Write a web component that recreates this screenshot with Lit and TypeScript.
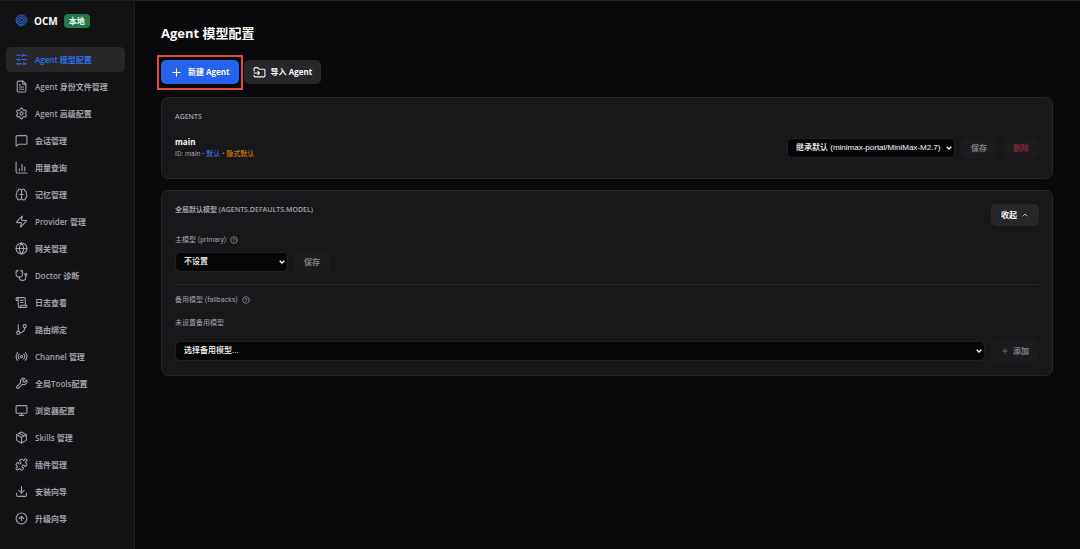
import { LitElement, html, svg, css, type SVGTemplateResult } from "lit";
import { customElement, property, state } from "lit/decorators.js";
import { classMap } from "lit/directives/class-map.js";

const icons: Record<string, SVGTemplateResult> = {
  sliders: svg`<path d="M21 4h-7M10 4H3M21 12h-9M8 12H3M21 20h-5M12 20H3M14 2v4M8 10v4M16 18v4"/>`,
  file: svg`<path d="M15 2H6a2 2 0 0 0-2 2v16a2 2 0 0 0 2 2h12a2 2 0 0 0 2-2V7Z"/><path d="M14 2v4a2 2 0 0 0 2 2h4M10 9H8M16 13H8M16 17H8"/>`,
  settings: svg`<path d="M9.671 4.136a2.34 2.34 0 0 1 4.659 0 2.34 2.34 0 0 0 3.319 1.915 2.34 2.34 0 0 1 2.33 4.033 2.34 2.34 0 0 0 0 3.831 2.34 2.34 0 0 1-2.33 4.033 2.34 2.34 0 0 0-3.319 1.915 2.34 2.34 0 0 1-4.659 0 2.34 2.34 0 0 0-3.32-1.915 2.34 2.34 0 0 1-2.33-4.033 2.34 2.34 0 0 0 0-3.831A2.34 2.34 0 0 1 6.35 6.051a2.34 2.34 0 0 0 3.319-1.915"/><circle cx="12" cy="12" r="3"/>`,
  message: svg`<path d="M22 17a2 2 0 0 1-2 2H6.8a2 2 0 0 0-1.4.6l-2.2 2.2A.7.7 0 0 1 2 21.300V5a2 2 0 0 1 2-2h16a2 2 0 0 1 2 2z"/>`,
  chart: svg`<path d="M2 2v18a2 2 0 0 0 2 2h18M8 18v-3M13 18V6M18 18v-7"/>`,
  brain: svg`<path d="M12 5a3 3 0 1 0-5.997.125 4 4 0 0 0-2.526 5.770 4 4 0 0 0 .556 6.588A4 4 0 1 0 12 18Z"/><path d="M12 5a3 3 0 1 1 5.997.125 4 4 0 0 1 2.526 5.770 4 4 0 0 1-.556 6.588A4 4 0 1 1 12 18Z"/><path d="M9 12h6"/>`,
  zap: svg`<path d="M4 14a1 1 0 0 1-.78-1.630l9.900-10.200a.5.5 0 0 1 .86.460l-1.920 6.020A1 1 0 0 0 13 10h7a1 1 0 0 1 .78 1.630l-9.900 10.200a.5.5 0 0 1-.86-.460l1.920-6.020A1 1 0 0 0 11 14z"/>`,
  globe: svg`<circle cx="12" cy="12" r="10"/><path d="M12 2a14.500 14.500 0 0 0 0 20 14.500 14.500 0 0 0 0-20M2 12h20"/>`,
  stethoscope: svg`<path d="M11 2v2M5 2v2M5 3H4a2 2 0 0 0-2 2v4a6 6 0 0 0 12 0V5a2 2 0 0 0-2-2h-1"/><path d="M8 15a6 6 0 0 0 12 0v-3"/><circle cx="20" cy="10" r="2"/>`,
  scroll: svg`<path d="M15 12h-5M15 8h-5M19 17V5a2 2 0 0 0-2-2H4"/><path d="M8 21h12a2 2 0 0 0 2-2v-1a1 1 0 0 0-1-1H11a1 1 0 0 0-1 1v1a2 2 0 1 1-4 0V5a2 2 0 1 0-4 0v2a1 1 0 0 0 1 1h3"/>`,
  branch: svg`<path d="M6 3v12"/><circle cx="18" cy="6" r="3"/><circle cx="6" cy="18" r="3"/><path d="M18 9a9 9 0 0 1-9 9"/>`,
  radio: svg`<path d="M4.900 19.100C1 15.200 1 8.800 4.900 4.900M7.800 16.200c-2.300-2.300-2.300-6.100 0-8.500"/><circle cx="12" cy="12" r="2"/><path d="M16.200 7.800c2.300 2.300 2.300 6.100 0 8.500M19.100 4.900C23 8.800 23 15.100 19.100 19"/>`,
  wrench: svg`<path d="M14.700 6.300a1 1 0 0 0 0 1.400l1.600 1.600a1 1 0 0 0 1.400 0l3.770-3.770a6 6 0 0 1-7.940 7.940l-6.910 6.910a2.120 2.120 0 0 1-3-3l6.910-6.910a6 6 0 0 1 7.940-7.940l-3.760 3.760z"/>`,
  monitor: svg`<rect x="2" y="3" width="20" height="14" rx="2"/><path d="M8 21h8M12 17v4"/>`,
  package: svg`<path d="M11 21.730a2 2 0 0 0 2 0l7-4A2 2 0 0 0 21 16V8a2 2 0 0 0-1-1.730l-7-4a2 2 0 0 0-2 0l-7 4A2 2 0 0 0 3 8v8a2 2 0 0 0 1 1.730z"/><path d="M12 22V12M3.300 7 12 12l8.700-5M7.500 4.270l9 5.150"/>`,
  puzzle: svg`<path d="M15.390 4.390a1 1 0 0 0 1.680-.474 2.500 2.500 0 1 1 3.014 3.015 1 1 0 0 0-.474 1.680l1.683 1.682a2.414 2.414 0 0 1 0 3.414L19.610 15.390a1 1 0 0 1-1.680-.474 2.500 2.500 0 1 0-3.014 3.015 1 1 0 0 1 .474 1.680l-1.683 1.682a2.414 2.414 0 0 1-3.414 0L8.610 19.610a1 1 0 0 0-1.680.474 2.500 2.500 0 1 1-3.014-3.015 1 1 0 0 0 .474-1.680l-1.683-1.682a2.414 2.414 0 0 1 0-3.414L4.390 8.610a1 1 0 0 1 1.680.474 2.500 2.500 0 1 0 3.014-3.015 1 1 0 0 1-.474-1.680l1.683-1.682a2.414 2.414 0 0 1 3.414 0z"/>`,
  download: svg`<path d="M21 15v4a2 2 0 0 1-2 2H5a2 2 0 0 1-2-2v-4M7 10l5 5 5-5M12 15V3"/>`,
  up: svg`<circle cx="12" cy="12" r="10"/><path d="m16 12-4-4-4 4M12 16V8"/>`,
  plus: svg`<path d="M5 12h14M12 5v14"/>`,
  folder: svg`<path d="M2 9V5a2 2 0 0 1 2-2h3.900a2 2 0 0 1 1.690.900l.81 1.200a2 2 0 0 0 1.670.900H20a2 2 0 0 1 2 2v10a2 2 0 0 1-2 2H4a2 2 0 0 1-2-2v-1M2 13h10M9 16l3-3-3-3"/>`,
  chevron: svg`<path d="m18 15-6-6-6 6"/>`,
  help: svg`<circle cx="12" cy="12" r="10"/><path d="M9.090 9a3 3 0 0 1 5.830 1c0 2-3 3-3 3M12 17h.01"/>`,
  logo: svg`<path stroke-width="1.700" d="M13 22A10.500 10.500 0 0 1 2 11 9.500 9.500 0 0 1 12 2a9.500 9.500 0 0 1 10 9 8.500 8.500 0 0 1-8 9 8 8 0 0 1-9-8 7 7 0 0 1 7-7 7 7 0 0 1 7 7 5.500 5.500 0 0 1-6 5 5 5 0 0 1-5-5 4 4 0 0 1 4-4 4 4 0 0 1 4 4 2.500 2.500 0 0 1-3 2 2 2 0 0 1-2-2"/>`,
};

@customElement("ocm-icon")
class OcmIcon extends LitElement {
  static styles = css`
    :host { display: inline-flex; flex: none; width: 13px; height: 13px; }
    svg { width: 100%; height: 100%; fill: none; stroke: currentColor; stroke-width: 2; stroke-linecap: round; stroke-linejoin: round; }
  `;
  @property() name = "";
  render() {
    return html`<svg viewBox="0 0 24 24" aria-hidden="true">${icons[this.name]}</svg>`;
  }
}

const nav: [string, string][] = [
  ["sliders", "Agent 模型配置"],
  ["file", "Agent 身份文件管理"],
  ["settings", "Agent 高级配置"],
  ["message", "会话管理"],
  ["chart", "用量查询"],
  ["brain", "记忆管理"],
  ["zap", "Provider 管理"],
  ["globe", "网关管理"],
  ["stethoscope", "Doctor 诊断"],
  ["scroll", "日志查看"],
  ["branch", "路由绑定"],
  ["radio", "Channel 管理"],
  ["wrench", "全局Tools配置"],
  ["monitor", "浏览器配置"],
  ["package", "Skills 管理"],
  ["puzzle", "插件管理"],
  ["download", "安装向导"],
  ["up", "升级向导"],
];

@customElement("app-root")
class AppRoot extends LitElement {
  static styles = css`
    :host { display: block; font: 600 8px/12px "Open Sans", "Noto Sans CJK SC", sans-serif; color: #fafafa; }
    * { box-sizing: border-box; }
    h1, h2, h3, p { margin: 0; font: inherit; }
    button, select { font: inherit; color: inherit; border: 0; margin: 0; }
    .app { display: flex; min-height: 100vh; background: #09090b; border-top: 1px solid #222224; }
    .sidebar { flex: none; width: 135px; background: #131315; border-right: 1px solid #202023; padding: 9px 9px 9px 6px; }
    .brand { display: flex; align-items: center; gap: 6px; height: 21px; padding-left: 9px; margin-bottom: 16px; font-size: 10px; font-weight: 700; }
    .brand ocm-icon { color: #2f6fe4; }
    .badge { background: #24794a; color: #f0fdf4; font-size: 8px; border-radius: 4px; padding: 1px 5px; }
    .nav { display: flex; flex-direction: column; gap: 2px; }
    .item { display: flex; align-items: center; gap: 7px; height: 25px; padding: 0 9px; border-radius: 5px; color: #a1a1aa; text-decoration: none; white-space: nowrap; }
    .item.active { background: #27272a; color: #2f6fed; }
    .main { flex: 1; min-width: 0; padding: 22px 27px 22px 26px; }
    h1 { font-size: 13px; line-height: 20px; font-weight: 700; }
    .toolbar { display: flex; gap: 5px; margin: 17px 0 13px; }
    .btn { display: inline-flex; align-items: center; justify-content: center; gap: 4px; height: 22px; padding: 0 10px; border-radius: 5px; background: #27272a; white-space: nowrap; }
    .btn:disabled { opacity: 0.45; background: #222225; }
    .btn ocm-icon { width: 8px; height: 8px; }
    .toolbar .btn { height: 24px; gap: 5px; padding: 0 9px; font-weight: 700; }
    .toolbar ocm-icon { width: 13px; height: 13px; }
    .toolbar .primary { position: relative; background: #2563eb; }
    .primary::after { content: ""; position: absolute; inset: -5px -4px -6px; border: 2px solid #e5484d; }
    .danger { color: #f43f5e; }
    .card { background: #18181b; border: 1px solid #27272a; border-radius: 7px; padding: 13px; margin-bottom: 11px; }
    .caption { font-size: 7px; color: #a1a1aa; }
    .head { display: flex; align-items: flex-start; justify-content: space-between; }
    .agent { display: flex; align-items: center; justify-content: space-between; margin: 13px 0 5px; }
    .actions, .row { display: flex; align-items: center; gap: 6px; }
    .name { font-size: 8px; font-weight: 700; }
    .meta { font-family: Roboto, "Noto Sans CJK SC", sans-serif; font-size: 7px; font-weight: 400; color: #a1a1aa; }
    .blue { color: #3b82f6; }
    .orange { color: #f08c00; }
    select { appearance: none; height: 20px; padding: 0 12px 0 8px; border: 1px solid #222225; border-radius: 5px; font-family: "Liberation Sans", "Noto Sans CJK SC", sans-serif; font-weight: 500; background: #060608 url('data:image/svg+xml,<svg xmlns="http://www.w3.org/2000/svg" viewBox="0 0 6 4"><path d="M.7.700 3 3 5.300.700" fill="none" stroke="white" stroke-width="1.300"/></svg>') no-repeat right 2px center / 6px 4px; }
    .agent-select { width: 168px; }
    .primary-select { width: 113px; }
    .fallback-select { flex: 1; min-width: 0; }
    .label { display: flex; align-items: center; gap: 4px; font-family: Roboto, "Noto Sans CJK SC", sans-serif; font-size: 7px; font-weight: 400; color: #a1a1aa; }
    .label ocm-icon { width: 8px; height: 8px; }
    .section { margin-top: 8px; }
    .section .row { margin-top: 5px; }
    .fallbacks { border-top: 1px solid #27272a; margin-top: 11px; padding-top: 9px; }
    .empty { color: #a1a1aa; font-size: 7px; font-weight: 400; margin-top: 11px; }
    .fallbacks .row { margin-top: 11px; }
  `;
  @state() private active = 0;
  @state() private open = true;

  render() {
    return html`<div class="app">
      <aside class="sidebar">
        <div class="brand"><ocm-icon name="logo"></ocm-icon><span>OCM</span><span class="badge">本地</span></div>
        <nav class="nav">
          ${nav.map(([icon, text], i) => html`<a href="#" class=${classMap({ item: true, active: i === this.active })}
            @click=${(e: Event) => { e.preventDefault(); this.active = i; }}><ocm-icon name=${icon}></ocm-icon><span>${text}</span></a>`)}
        </nav>
      </aside>
      <main class="main">
        <h1>Agent 模型配置</h1>
        <div class="toolbar">
          <button class="btn primary"><ocm-icon name="plus"></ocm-icon>新建 Agent</button>
          <button class="btn"><ocm-icon name="folder"></ocm-icon>导入 Agent</button>
        </div>
        <section class="card">
          <h2 class="caption">AGENTS</h2>
          <div class="agent">
            <div>
              <h3 class="name">main</h3>
              <p class="meta">ID: main <span class="blue">• 默认</span> <span class="orange">• 隐式默认</span></p>
            </div>
            <div class="actions">
              <select class="agent-select" aria-label="main"><option>继承默认 (minimax-portal/MiniMax-M2.7)</option></select>
              <button class="btn" disabled>保存</button>
              <button class="btn danger" disabled>删除</button>
            </div>
          </div>
        </section>
        <section class="card">
          <div class="head">
            <h2 class="caption">全局默认模型 (AGENTS.DEFAULTS.MODEL)</h2>
            <button class="btn" @click=${() => { this.open = !this.open; }}>收起 <ocm-icon name="chevron"></ocm-icon></button>
          </div>
          ${this.open ? html`
            <div class="section">
              <label class="label" for="primary">主模型 (primary) <ocm-icon name="help"></ocm-icon></label>
              <div class="row">
                <select id="primary" class="primary-select"><option>不设置</option></select>
                <button class="btn" disabled>保存</button>
              </div>
            </div>
            <div class="fallbacks">
              <label class="label" for="fallback">备用模型 (fallbacks) <ocm-icon name="help"></ocm-icon></label>
              <p class="empty">未设置备用模型</p>
              <div class="row">
                <select id="fallback" class="fallback-select"><option>选择备用模型...</option></select>
                <button class="btn" disabled><ocm-icon name="plus"></ocm-icon>添加</button>
              </div>
            </div>` : ""}
        </section>
      </main>
    </div>`;
  }
}
